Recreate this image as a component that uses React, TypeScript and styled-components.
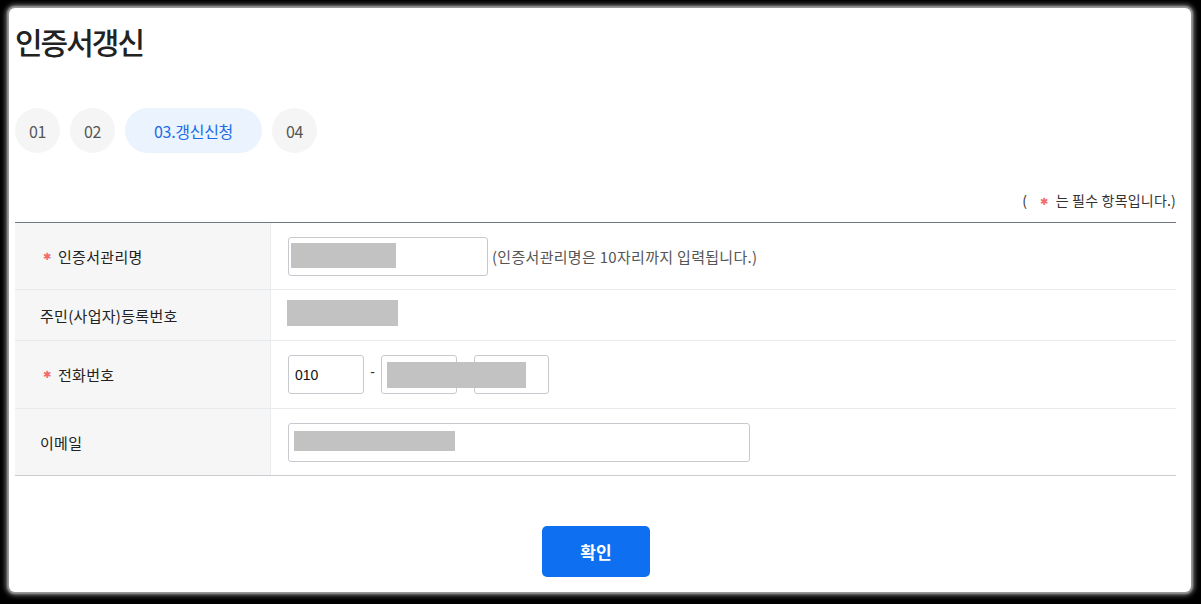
import styled, { createGlobalStyle } from "styled-components";

const GlobalStyle = createGlobalStyle`
  html, body {
    margin: 0;
    padding: 0;
    background: #000;
  }
  body {
    font-family: "Noto Sans CJK KR", "Noto Sans", sans-serif;
    color: #222;
  }
  * {
    box-sizing: border-box;
  }
`;

const StyledPage = styled.div`
  height: 604px;
  padding: 8px 10px 12px 9px;
`;

const StyledCard = styled.main`
  height: 100%;
  background: #fff;
  border-radius: 6px;
  box-shadow: 0 0 2px 2px #9c9c9c, 0 0 4px 4px #555;
  padding: 13px 15px 0 6px;
`;

const StyledTitle = styled.h1`
  margin: 0;
  font-size: 30px;
  line-height: 40px;
  font-weight: 500;
  letter-spacing: -2px;
  color: #222;
`;

const StyledSteps = styled.ol`
  display: flex;
  gap: 10px;
  margin: 47px 0 0;
  padding: 0;
  list-style: none;
`;

const StyledStep = styled.li<{ $active?: boolean }>`
  display: flex;
  align-items: center;
  justify-content: center;
  height: 45px;
  min-width: 45px;
  padding: ${({ $active }) => ($active ? "0 29px" : "0")};
  border-radius: 23px;
  background: ${({ $active }) => ($active ? "#ebf3fe" : "#f5f5f5")};
  color: ${({ $active }) => ($active ? "#1b6be6" : "#555")};
  font-size: 16px;
  letter-spacing: -0.3px;
`;

const StyledNote = styled.p`
  margin: 38px 0 0;
  text-align: right;
  font-size: 14px;
  line-height: 18px;
  color: #333;
  letter-spacing: 0.2px;
`;

const StyledStar = styled.span`
  color: #f26a6a;
  font-family: "DejaVu Sans", sans-serif;
  font-size: 10px;
  margin: 0 7px 0 13px;
  vertical-align: 1px;
`;

const StyledTable = styled.div`
  margin-top: 11px;
  border-top: 1px solid #6f7882;
  border-bottom: 1px solid #c9cdd1;
`;

const StyledRow = styled.div<{ $height: number }>`
  display: grid;
  grid-template-columns: 256px 1fr;
  height: ${({ $height }) => $height}px;
  border-bottom: 1px solid #e8ebee;

  &:last-child {
    border-bottom: none;
  }
`;

const StyledLabel = styled.div<{ $required?: boolean }>`
  display: flex;
  align-items: center;
  padding-left: ${({ $required }) => ($required ? "28px" : "25px")};
  background: #f6f6f6;
  border-right: 1px solid #e8ebee;
  font-size: 15px;
  color: #222;
  letter-spacing: 0.3px;
`;

const StyledRequired = styled.span`
  color: #f26a6a;
  font-family: "DejaVu Sans", sans-serif;
  font-size: 10px;
  width: 15px;
`;

const StyledValue = styled.div`
  display: flex;
  align-items: center;
  padding-left: 17px;
`;

const StyledInputBox = styled.div<{ $width: number }>`
  position: relative;
  width: ${({ $width }) => $width}px;
  height: 39px;
  border: 1px solid #c6cacf;
  border-radius: 3px;
  background: #fff;
`;

const StyledInput = styled.input`
  width: 100%;
  height: 100%;
  border: none;
  background: transparent;
  padding: 0 6px;
  font-family: "Liberation Sans", Arial, sans-serif;
  font-size: 14px;
  color: #111;
  outline: none;
`;

const StyledMask = styled.span<{ $w: number; $h: number; $x?: number; $y?: number }>`
  position: absolute;
  left: ${({ $x }) => $x ?? 2}px;
  top: ${({ $y }) => $y ?? 5}px;
  width: ${({ $w }) => $w}px;
  height: ${({ $h }) => $h}px;
  background: #c2c2c2;
`;

const StyledBlock = styled.span<{ $w: number; $h: number }>`
  display: inline-block;
  width: ${({ $w }) => $w}px;
  height: ${({ $h }) => $h}px;
  background: #c2c2c2;
  margin-left: -1px;
  margin-top: -4px;
`;

const StyledHint = styled.span`
  margin-left: 4px;
  font-size: 15px;
  color: #555;
  letter-spacing: 0.3px;
`;

const StyledPhone = styled.div`
  position: relative;
  display: flex;
  align-items: center;
`;

const StyledDash = styled.span`
  width: 17px;
  text-align: center;
  font-family: "Liberation Sans", Arial, sans-serif;
  font-size: 14px;
  color: #333;
  margin-top: -6px;
`;

const StyledActions = styled.div`
  display: flex;
  justify-content: center;
  margin-top: 50px;
`;

const StyledButton = styled.button`
  width: 108px;
  height: 51px;
  border: none;
  border-radius: 5px;
  background: #0e6ff0;
  color: #fff;
  font-family: "Noto Sans CJK KR", sans-serif;
  font-size: 17px;
  font-weight: 700;
  margin-left: 1px;
`;

function App() {
  return (
    <StyledPage>
      <GlobalStyle />
      <StyledCard>
        <StyledTitle>인증서갱신</StyledTitle>
        <StyledSteps>
          <StyledStep>01</StyledStep>
          <StyledStep>02</StyledStep>
          <StyledStep $active>03.갱신신청</StyledStep>
          <StyledStep>04</StyledStep>
        </StyledSteps>
        <StyledNote>
          (<StyledStar>✱</StyledStar>는 필수 항목입니다.)
        </StyledNote>
        <StyledTable>
          <StyledRow $height={67}>
            <StyledLabel $required>
              <StyledRequired>✱</StyledRequired>인증서관리명
            </StyledLabel>
            <StyledValue>
              <StyledInputBox $width={200}>
                <StyledMask $w={105} $h={25} />
              </StyledInputBox>
              <StyledHint>(인증서관리명은 10자리까지 입력됩니다.)</StyledHint>
            </StyledValue>
          </StyledRow>
          <StyledRow $height={51}>
            <StyledLabel>주민(사업자)등록번호</StyledLabel>
            <StyledValue>
              <StyledBlock $w={111} $h={26} />
            </StyledValue>
          </StyledRow>
          <StyledRow $height={68}>
            <StyledLabel $required>
              <StyledRequired>✱</StyledRequired>전화번호
            </StyledLabel>
            <StyledValue>
              <StyledPhone>
                <StyledInputBox $width={76}>
                  <StyledInput defaultValue="010" />
                </StyledInputBox>
                <StyledDash>-</StyledDash>
                <StyledInputBox $width={76} />
                <StyledDash>-</StyledDash>
                <StyledInputBox $width={75} />
                <StyledMask $w={139} $h={26} $x={99} $y={7} />
              </StyledPhone>
            </StyledValue>
          </StyledRow>
          <StyledRow $height={66}>
            <StyledLabel>이메일</StyledLabel>
            <StyledValue>
              <StyledInputBox $width={462}>
                <StyledMask $w={161} $h={20} $x={5} $y={7} />
              </StyledInputBox>
            </StyledValue>
          </StyledRow>
        </StyledTable>
        <StyledActions>
          <StyledButton>확인</StyledButton>
        </StyledActions>
      </StyledCard>
    </StyledPage>
  );
}

export default App;
